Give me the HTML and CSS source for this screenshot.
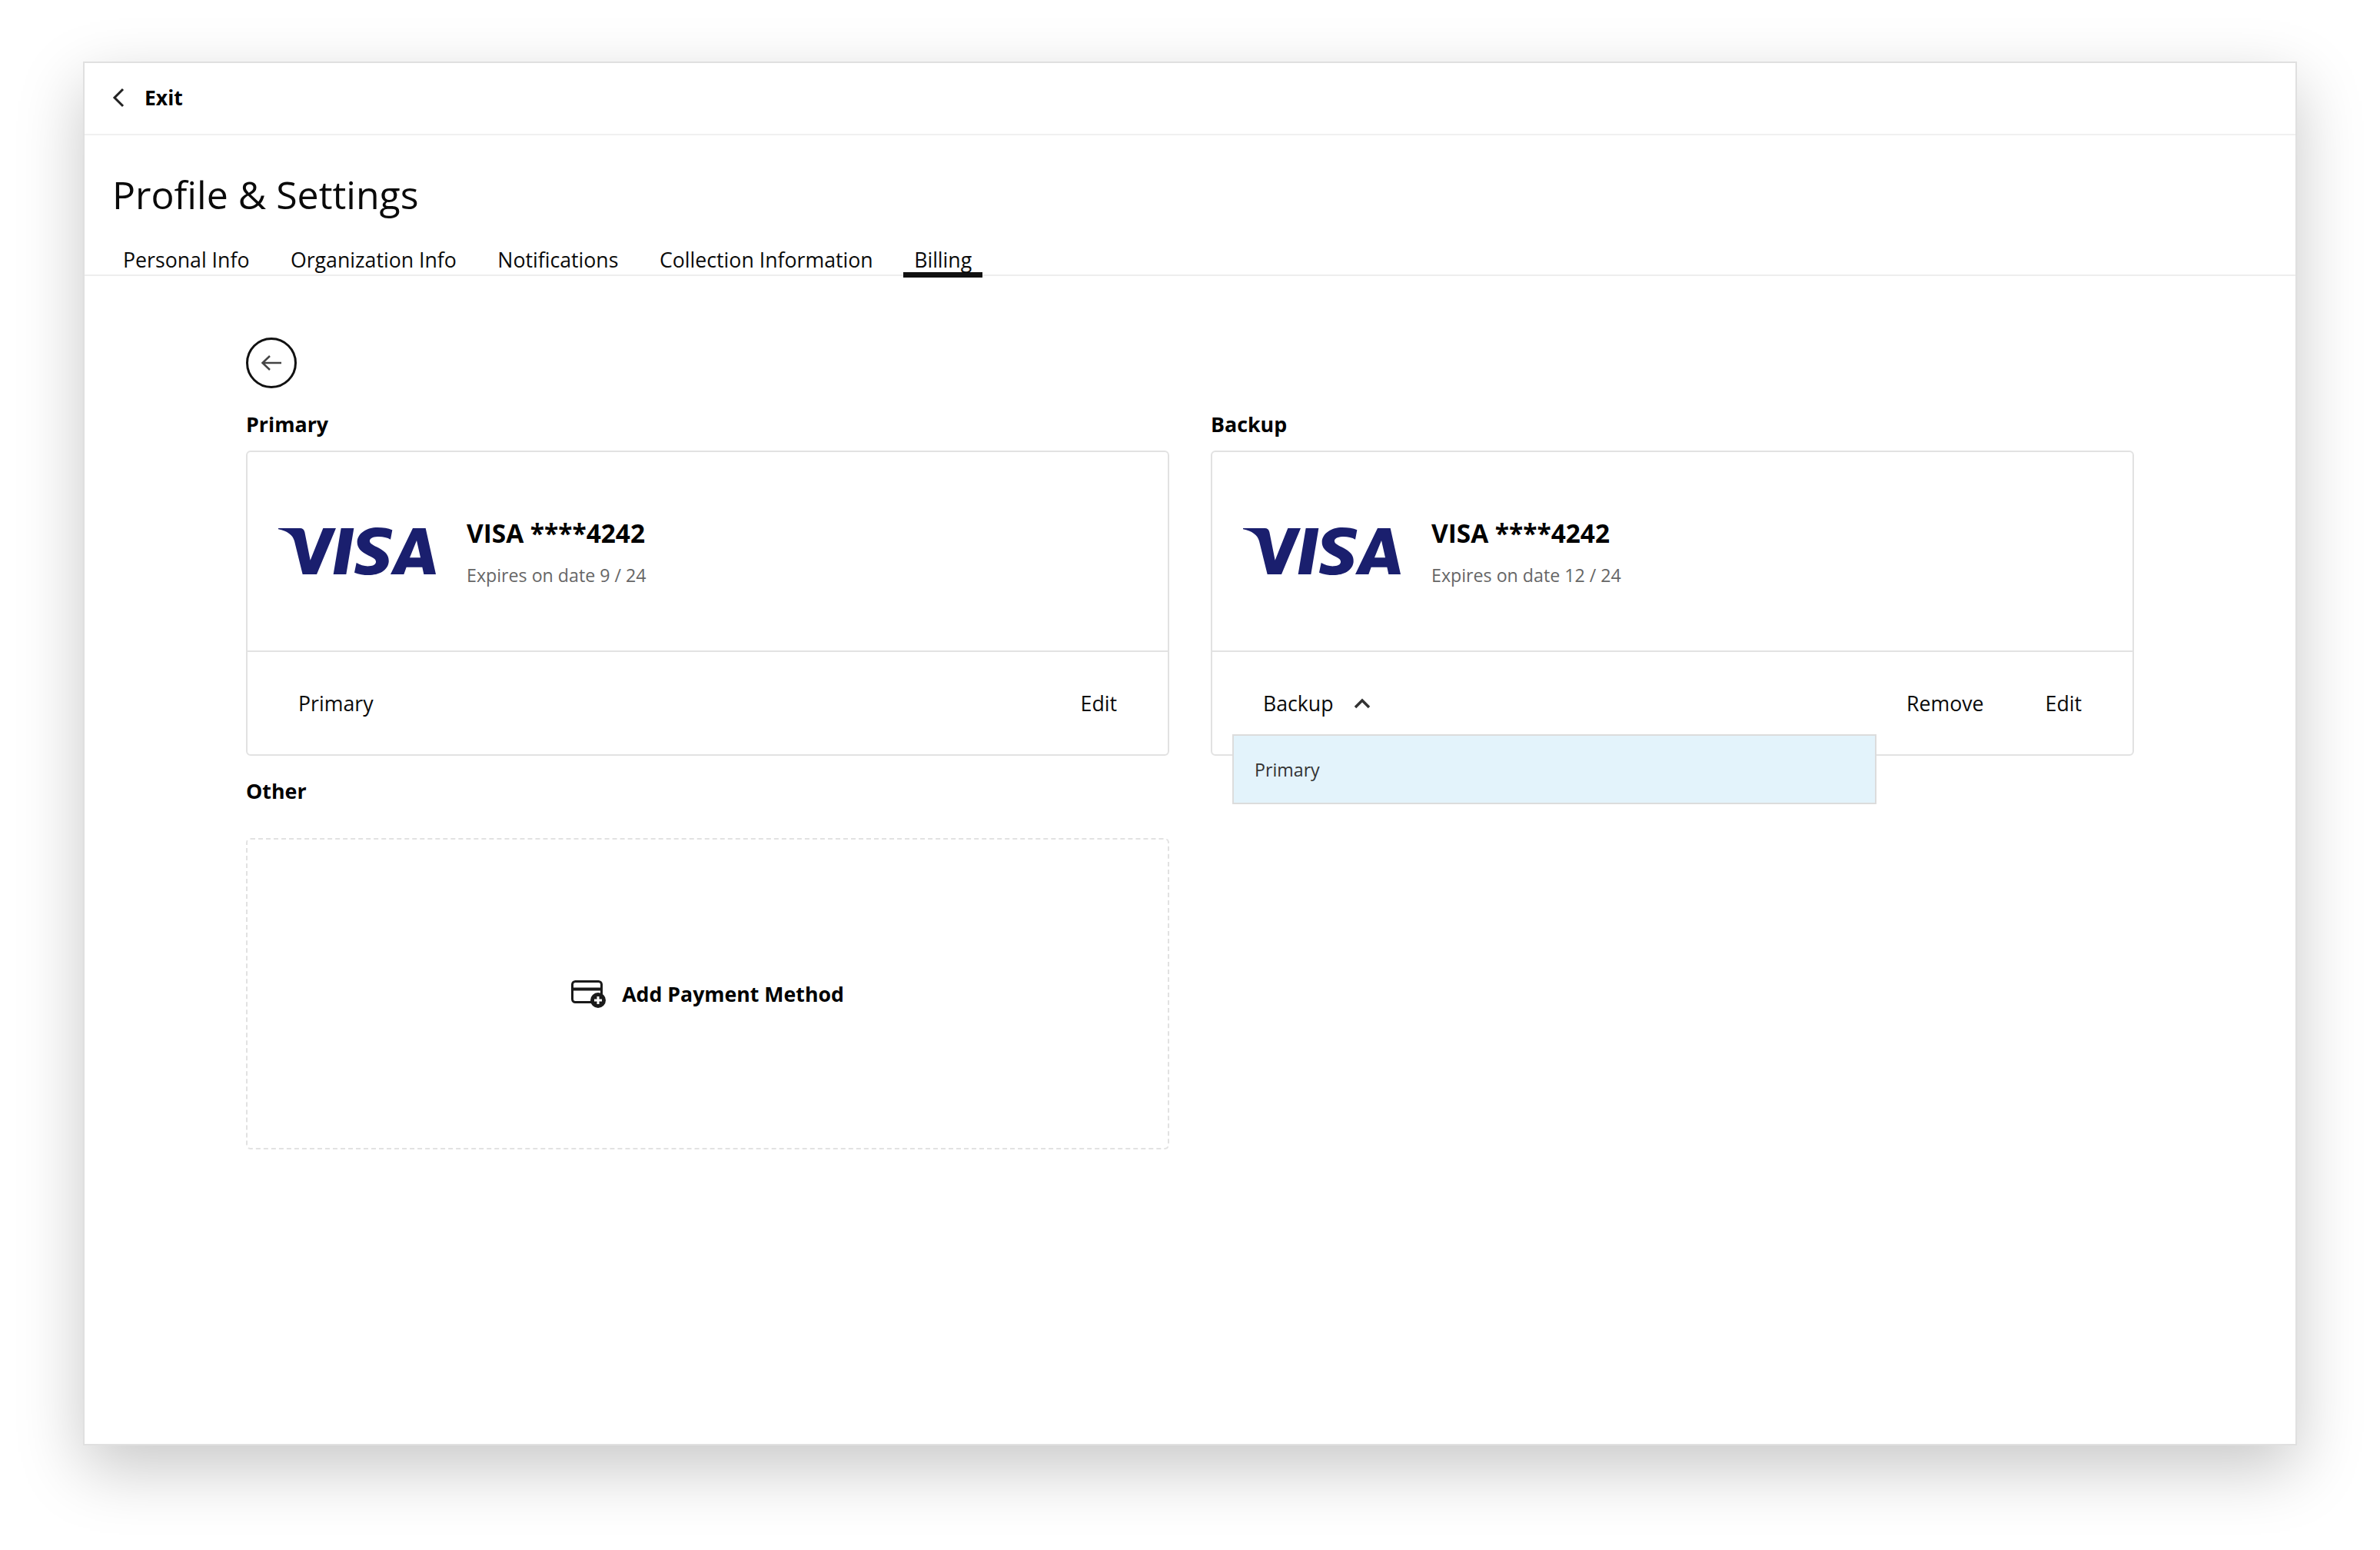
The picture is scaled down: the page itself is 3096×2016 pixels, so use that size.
FILE: index.html
```html
<!DOCTYPE html>
<html lang="en">
<head>
    <meta charset="UTF-8">
    <title>Profile &amp; Settings</title>
    <link rel="stylesheet" href="styles.css">
</head>
<body>
    <div class="window">
        <header class="top-bar">
            <svg class="exit-icon" width="16" height="26" viewBox="0 0 16 26"><path d="M14 2 L3 13 L14 24" fill="none" stroke="#222" stroke-width="3"/></svg>
            <span class="exit-label">Exit</span>
        </header>
        <h1 class="page-title">Profile &amp; Settings</h1>
        <nav class="tabs">
            <span class="tab">Personal Info</span>
            <span class="tab">Organization Info</span>
            <span class="tab">Notifications</span>
            <span class="tab">Collection Information</span>
            <span class="tab tab-active">Billing</span>
        </nav>
        <main class="content">
            <div class="back-button">
                <svg width="28" height="22" viewBox="0 0 28 22"><path d="M27 11 H3 M12 2 L2.500 11 L12 20" fill="none" stroke="#444" stroke-width="2.500"/></svg>
            </div>
            <div class="columns">
                <section class="column">
                    <h2 class="section-label">Primary</h2>
                    <div class="card">
                        <div class="card-body">
                            <svg class="visa-logo" width="205" height="62" viewBox="65 77 615 186"><use href="#visa"/></svg>
                            <div>
                                <div class="card-number">VISA ****4242</div>
                                <div class="card-expiry">Expires on date 9 / 24</div>
                            </div>
                        </div>
                        <div class="card-footer">
                            <span class="role">Primary</span>
                            <div class="card-actions"><span>Edit</span></div>
                        </div>
                    </div>
                    <h2 class="section-label other-label">Other</h2>
                    <div class="add-card">
                        <svg width="46" height="36" viewBox="0 0 46 36">
                            <rect x="1.500" y="1.500" width="38" height="27" rx="4" fill="none" stroke="#1a1a1a" stroke-width="3"/>
                            <path d="M1.500 11.500 H39.500" stroke="#1a1a1a" stroke-width="4"/>
                            <circle cx="35" cy="26" r="10" fill="#1a1a1a"/>
                            <path d="M35 21 V31 M30 26 H40" stroke="#fff" stroke-width="3"/>
                        </svg>
                        <span>Add Payment Method</span>
                    </div>
                </section>
                <section class="column">
                    <h2 class="section-label">Backup</h2>
                    <div class="card">
                        <div class="card-body">
                            <svg class="visa-logo" width="205" height="62" viewBox="65 77 615 186"><use href="#visa"/></svg>
                            <div>
                                <div class="card-number">VISA ****4242</div>
                                <div class="card-expiry">Expires on date 12 / 24</div>
                            </div>
                        </div>
                        <div class="card-footer">
                            <span class="role">Backup</span>
                            <svg class="chevron" width="22" height="14" viewBox="0 0 22 14"><path d="M2 12 L11 3 L20 12" fill="none" stroke="#333" stroke-width="3.500"/></svg>
                            <div class="card-actions"><span>Remove</span><span>Edit</span></div>
                        </div>
                        <div class="role-menu">Primary</div>
                    </div>
                </section>
            </div>
        </main>
    </div>

    <svg width="0" height="0" class="defs">
        <defs>
            <g id="visa" fill="#1a1f6e">
                <path d="M65 80 H150 C160 80 165 85 168 95 L190 205 L240 80 H290 L215 260 H160 L128 130 C122 108 100 90 65 84 Z"/>
                <path d="M310 80 H360 L330 260 H280 Z"/>
                <path d="M510 87 L503 124 C490 116 470 112 452 113 C432 114 420 122 422 132 C424 144 445 150 465 162 C485 174 498 188 496 212 C492 245 458 263 418 263 C398 263 378 260 362 253 L370 215 C385 224 402 229 420 228 C438 227 447 220 446 210 C445 198 428 193 410 183 C388 171 372 157 373 132 C375 100 410 77 452 77 C475 77 495 80 510 87 Z"/>
                <path fill-rule="evenodd" d="M590 80 H640 L680 260 H633 L627 232 H565 L555 260 H503 Z M578 195 H620 L605 128 Z"/>
            </g>
        </defs>
    </svg>
</body>
</html>
```

FILE: styles.css
```css
body {
    margin: 0;
    padding: 80px 108px 136px;
    background-color: #fff;
    font-family: "Open Sans", Arial, sans-serif;
    font-size: 26.700px;
    color: #0a0a0a;
}
.defs {
    display: block;
}
.window {
    height: 1800px;
    box-sizing: border-box;
    border: 2px solid #e0e0e0;
    background-color: #fff;
    box-shadow: 0 30px 80px rgba(0, 0, 0, 0.22);
}
.top-bar {
    display: flex;
    align-items: center;
    height: 90px;
    padding-bottom: 2px;
    padding-left: 36px;
    border-bottom: 2px solid #f0f0f0;
}
.exit-icon {
    margin-right: 26px;
}
.exit-label {
    font-weight: 700;
    font-size: 26.500px;
    color: #000;
}
.page-title {
    margin: 41px 0 27px 36px;
    font-size: 50px;
    line-height: 72px;
    font-weight: 400;
}
.tabs {
    display: flex;
    gap: 25.500px;
    padding-left: 36px;
    border-bottom: 2px solid #eee;
}
.tab {
    box-sizing: border-box;
    height: 45px;
    margin-bottom: -4px;
    padding: 0 14px;
    line-height: 44px;
    border-bottom: 7px solid transparent;
}
.tab-active {
    border-bottom-color: #111;
}
.content {
    padding: 80px 210px 0;
}
.back-button {
    display: flex;
    align-items: center;
    justify-content: center;
    box-sizing: border-box;
    width: 66px;
    height: 66px;
    border: 3px solid #111;
    border-radius: 50%;
}
.columns {
    display: grid;
    grid-template-columns: 1201px 1201px;
    gap: 54px;
    margin-top: 27px;
}
.section-label {
    margin: 0 0 14px;
    font-size: 26.800px;
    line-height: 40px;
    font-weight: 700;
    color: #000;
}
.other-label {
    margin: 26px 0 41px;
}
.card {
    position: relative;
    box-sizing: border-box;
    height: 397px;
    border: 2px solid #e2e2e2;
    border-radius: 6px;
}
.card-body {
    display: flex;
    align-items: center;
    gap: 40px;
    box-sizing: border-box;
    height: 260px;
    padding-left: 40px;
    border-bottom: 2px solid #e2e2e2;
}
.visa-logo {
    display: block;
}
.card-number {
    font-size: 33.400px;
    font-weight: 700;
    line-height: 44px;
    color: #000;
}
.card-expiry {
    margin-top: 17px;
    font-size: 23.200px;
    line-height: 32px;
    color: #666;
}
.card-footer {
    display: flex;
    align-items: center;
    height: 133px;
    padding: 0 66px;
}
.chevron {
    margin-left: 26px;
}
.card-actions {
    display: flex;
    gap: 80px;
    margin-left: auto;
}
.role-menu {
    position: absolute;
    left: 26px;
    top: 367px;
    box-sizing: border-box;
    width: 838px;
    height: 91px;
    padding-left: 27px;
    border: 2px solid #dcdcdc;
    background-color: #e3f3fb;
    font-size: 23.200px;
    line-height: 88px;
    color: #333;
}
.add-card {
    display: flex;
    align-items: center;
    justify-content: center;
    gap: 20px;
    box-sizing: border-box;
    height: 405px;
    border: 2px dashed #e2e2e2;
    border-radius: 6px;
    font-weight: 700;
    color: #000;
}
```
